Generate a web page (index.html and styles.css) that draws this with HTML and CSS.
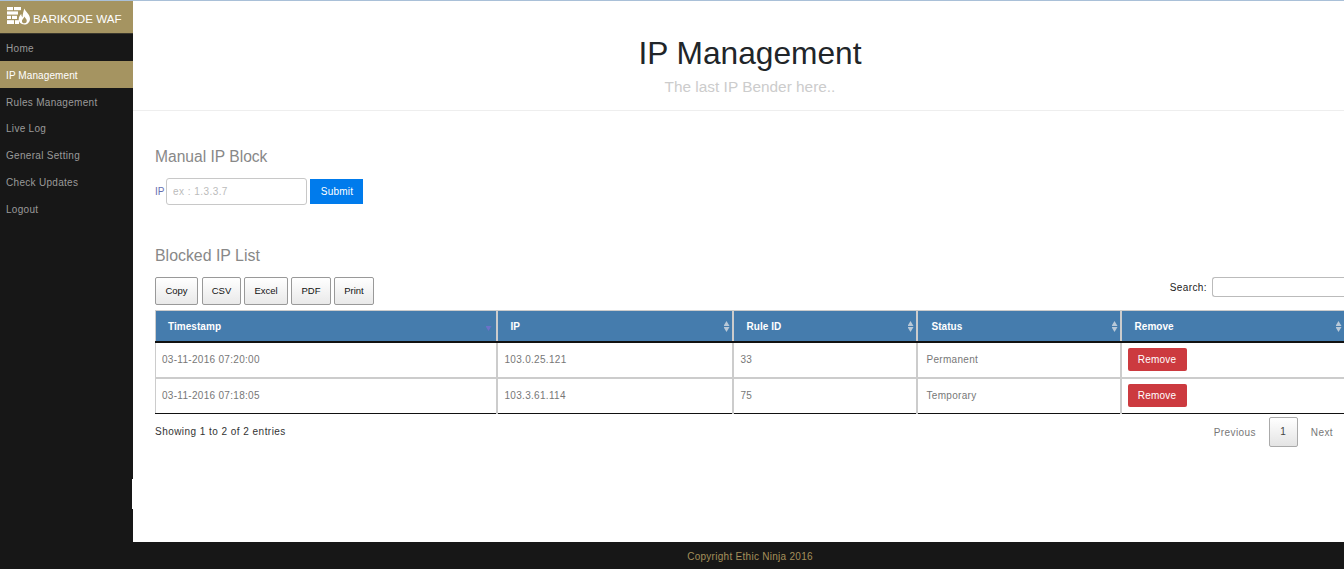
FILE: index.html
```html
<!DOCTYPE html>
<html lang="en">
<head>
<meta charset="utf-8">
<title>IP Management</title>
<link rel="stylesheet" href="styles.css">
</head>
<body>
<div class="app">
  <aside class="sidebar">
    <div class="brand">
      <svg class="logo" width="24" height="18" viewBox="0 0 24 18" aria-hidden="true">
        <g fill="#fff">
          <rect x="0" y="0" width="6" height="3.2"/><rect x="7" y="0" width="7" height="3.2"/>
          <rect x="0" y="4.400" width="11" height="3.200"/>
          <rect x="0" y="8.800" width="4" height="3.200"/><rect x="5" y="8.800" width="5" height="3.200"/>
          <rect x="0" y="13.200" width="7" height="3.800"/><rect x="8" y="13.200" width="4" height="3.800"/>
          <path d="M17.500 1.500c.5 3 5.500 5.500 5.500 10.200 0 3.500-2.600 5.800-5.700 5.800-3.300 0-5.600-2.300-5.600-5.200 0-2.100 1.200-3.800 2.600-5.200 0 1.500.4 2.500 1.200 3.100C15.700 7.200 16.400 4 17.500 1.500z"/>
        </g>
        <path d="M17.500 9.500c.3 1.300 2.300 2.300 2.300 4.300 0 1.700-1.100 2.500-2.500 2.500-1.400 0-2.400-.9-2.400-2.300 0-1.400 1.900-2.500 2.600-4.500z" fill="#a59461"/>
      </svg>
      <span class="brand-name">BARIKODE WAF</span>
    </div>
    <nav class="menu">
      <a class="menu-item">Home</a>
      <a class="menu-item is-active">IP Management</a>
      <a class="menu-item">Rules Management</a>
      <a class="menu-item">Live Log</a>
      <a class="menu-item">General Setting</a>
      <a class="menu-item">Check Updates</a>
      <a class="menu-item">Logout</a>
    </nav>
    <span class="notch"></span>
  </aside>

  <main class="main">
    <header class="page-head">
      <h1>IP Management</h1>
      <p>The last IP Bender here..</p>
    </header>

    <section class="content">
      <h2 class="section-title">Manual IP Block</h2>
      <form class="ip-form">
        <label class="ip-label" for="ip">IP</label>
        <input class="ip-input" id="ip" type="text" placeholder="ex : 1.3.3.7">
        <button class="submit" type="button">Submit</button>
      </form>

      <h2 class="section-title list-title">Blocked IP List</h2>
      <div class="toolbar">
        <div class="export">
          <button class="export-btn" type="button">Copy</button>
          <button class="export-btn" type="button">CSV</button>
          <button class="export-btn" type="button">Excel</button>
          <button class="export-btn" type="button">PDF</button>
          <button class="export-btn" type="button">Print</button>
        </div>
        <label class="search">Search:<input class="search-input" type="search"></label>
      </div>

      <table class="grid">
        <colgroup>
          <col class="c1"><col class="c2"><col class="c3"><col class="c4"><col class="c5">
        </colgroup>
        <thead>
          <tr>
            <th class="sorted">Timestamp</th>
            <th>IP</th>
            <th>Rule ID</th>
            <th class="status">Status</th>
            <th>Remove</th>
          </tr>
        </thead>
        <tbody>
          <tr>
            <td>03-11-2016 07:20:00</td><td>103.0.25.121</td><td>33</td><td class="status">Permanent</td>
            <td class="action"><button class="remove" type="button">Remove</button></td>
          </tr>
          <tr>
            <td>03-11-2016 07:18:05</td><td>103.3.61.114</td><td>75</td><td class="status">Temporary</td>
            <td class="action"><button class="remove" type="button">Remove</button></td>
          </tr>
        </tbody>
      </table>

      <div class="table-foot">
        <span class="info">Showing 1 to 2 of 2 entries</span>
        <div class="pager">
          <span class="page-link">Previous</span>
          <span class="page-current">1</span>
          <span class="page-link">Next</span>
        </div>
      </div>
    </section>
  </main>

  <footer class="footer">Copyright Ethic Ninja 2016</footer>
</div>
</body>
</html>
```
FILE: styles.css
```css
* { box-sizing: border-box; }
html, body { margin: 0; height: 100%; overflow: hidden; }
body { font-family: "Liberation Sans", Arial, sans-serif; background: #fff; color: #333; }

.app {
  display: grid;
  grid-template-columns: 133px 1fr;
  grid-template-rows: 541px 27px;
  height: 569px;
  width: 1344px;
  overflow: hidden;
  border-top: 1px solid #a9c0d8;
}

.sidebar {
  grid-row: 1 / 3;
  background: #171717;
  position: relative;
}
.brand {
  height: 33px;
  background: #a59461;
  color: #fff;
  font-size: 11.600px;
  display: flex;
  align-items: center;
  padding-left: 7px;
  gap: 2px;
  border-bottom: 1px solid #3a372c;
}
.brand-name { margin-top: 2px; }
.logo { flex: none; margin-top: -3px; }
.menu { display: flex; flex-direction: column; }
.menu-item {
  height: 26.800px;
  line-height: 26.800px;
  padding: 2px 0 0 6px;
  font-size: 10px;
  color: #9a9a9a;
  letter-spacing: .3px;
}
.is-active { background: #a59461; color: #fff; letter-spacing: .1px; }
.notch {
  position: absolute;
  right: 0;
  top: 478px;
  width: 1px;
  height: 30px;
  background: #fff;
}

.main { min-width: 0; overflow: hidden; }
.page-head {
  height: 110px;
  border-bottom: 1px solid #eee;
  text-align: center;
  padding-top: 33px;
  padding-left: 23px;
}
.page-head h1 {
  margin: 0;
  font-size: 31.700px;
  line-height: 38px;
  font-weight: 400;
  color: #212529;
}
.page-head p {
  margin: 4px 0 0;
  font-size: 15.400px;
  line-height: 22px;
  color: #ccc;
}

.content { padding: 36px 0 0 22px; width: 1211px; }
.section-title {
  margin: 0;
  font-size: 15.600px;
  line-height: 20px;
  font-weight: 400;
  color: #888;
}
.ip-form {
  display: flex;
  align-items: center;
  margin-top: 10px;
  height: 28px;
}
.ip-label { font-size: 10px; color: #6670b0; width: 11px; }
.ip-input {
  width: 141px;
  height: 27px;
  border: 1px solid #c8c8c8;
  border-radius: 3px;
  padding: 1px 6px 0;
  font: 10px "Liberation Sans", Arial, sans-serif;
  letter-spacing: .45px;
  outline: 0;
}
.ip-input::placeholder { color: #bbb; }
.submit {
  margin-left: 3px;
  width: 53px;
  height: 25px;
  padding: 1px 0 0 1px;
  border: 0;
  background: #007bec;
  color: #fff;
  font: 10px "Liberation Sans", Arial, sans-serif;
  letter-spacing: .2px;
}
.list-title { margin-top: 41px; font-size: 15.900px; }

.toolbar {
  display: flex;
  justify-content: space-between;
  align-items: flex-start;
  margin-top: 11px;
  height: 33px;
}
.export { display: flex; gap: 3px; }
.export-btn {
  height: 28px;
  padding: 0 0 2px;
  border: 1px solid #999;
  border-radius: 2px;
  background: linear-gradient(#fff, #e9e9e9);
  color: #111;
  font: 9.500px "Liberation Sans", Arial, sans-serif;
}
.export-btn:nth-child(1) { width: 43px; margin-right: 1px; }
.export-btn:nth-child(2) { width: 39px; }
.export-btn:nth-child(3) { width: 44px; }
.export-btn:nth-child(4) { width: 40px; }
.export-btn:nth-child(5) { width: 40px; }
.search {
  display: flex;
  align-items: center;
  font-size: 10px;
  letter-spacing: .4px;
  color: #222;
  gap: 5px;
  height: 20px;
}
.search-input {
  width: 132px;
  height: 20px;
  border: 1px solid #bbb;
  border-right: 0;
  border-radius: 3px 0 0 3px;
  margin: 0;
}

.grid {
  table-layout: fixed;
  border-collapse: collapse;
  width: 1189px;
  font-size: 10px;
  letter-spacing: .3px;
}
.c1 { width: 341px; }
.c2 { width: 236px; }
.c3 { width: 184px; }
.c4 { width: 204px; }
.c5 { width: 224px; }
.grid th {
  height: 31px;
  background: #457cad;
  color: #fff;
  font-weight: 700;
  text-align: left;
  padding: 2px 12px 0 13px;
  border: 2px solid #ccc;
  border-top-width: 1px;
  border-bottom: 2px solid #111;
  letter-spacing: .05px;
  position: relative;
}
.grid th:first-child, .grid td:first-child { border-left-width: 1px; }
.grid th:first-child { padding-left: 12px; }
.grid th.status { padding-left: 14px; }
.grid th::before,
.grid th::after {
  content: "";
  position: absolute;
  right: 2px;
  width: 6px;
  height: 5px;
  background: #b9c9d8;
}
.grid th::before { top: 10px; clip-path: polygon(50% 0, 100% 100%, 0 100%); }
.grid th::after { top: 16px; clip-path: polygon(0 0, 100% 0, 50% 100%); }
.grid th.sorted::before { display: none; }
.grid th.sorted::after { top: 15px; right: 4px; background: #6c72c8; }
.grid td {
  height: 36px;
  padding: 0 6px 0 7px;
  color: #777;
  border: 2px solid #ccc;
  border-top: 0;
  background: #fff;
}
.grid td:first-child { padding-left: 6px; }
.grid td.status { padding-left: 9px; }
.grid td.action { padding-left: 6px; }
.grid tbody tr:last-child td { border-bottom: 1px solid #111; }
.remove {
  width: 59px;
  height: 23px;
  padding: 0;
  border: 0;
  border-radius: 2px;
  background: #cc3a3f;
  color: #fff;
  font: 10px "Liberation Sans", Arial, sans-serif;
  letter-spacing: .2px;
  display: block;
}

.table-foot {
  display: flex;
  justify-content: space-between;
  align-items: flex-start;
  margin-top: 3px;
  font-size: 10px;
}
.info { color: #333; margin-top: 9px; letter-spacing: .46px; }
.pager { display: flex; align-items: center; padding-right: 11px; letter-spacing: .4px; }
.page-link { color: #777; }
.page-current {
  width: 29px;
  height: 30px;
  line-height: 28px;
  margin: 0 13px;
  text-align: center;
  border: 1px solid #aaa;
  border-radius: 2px;
  background: linear-gradient(#fff, #e4e4e4);
  color: #444;
}

.footer {
  background: #171717;
  color: #a5905a;
  font-size: 10px;
  letter-spacing: .28px;
  text-align: center;
  line-height: 29px;
  padding-left: 23px;
}
```
